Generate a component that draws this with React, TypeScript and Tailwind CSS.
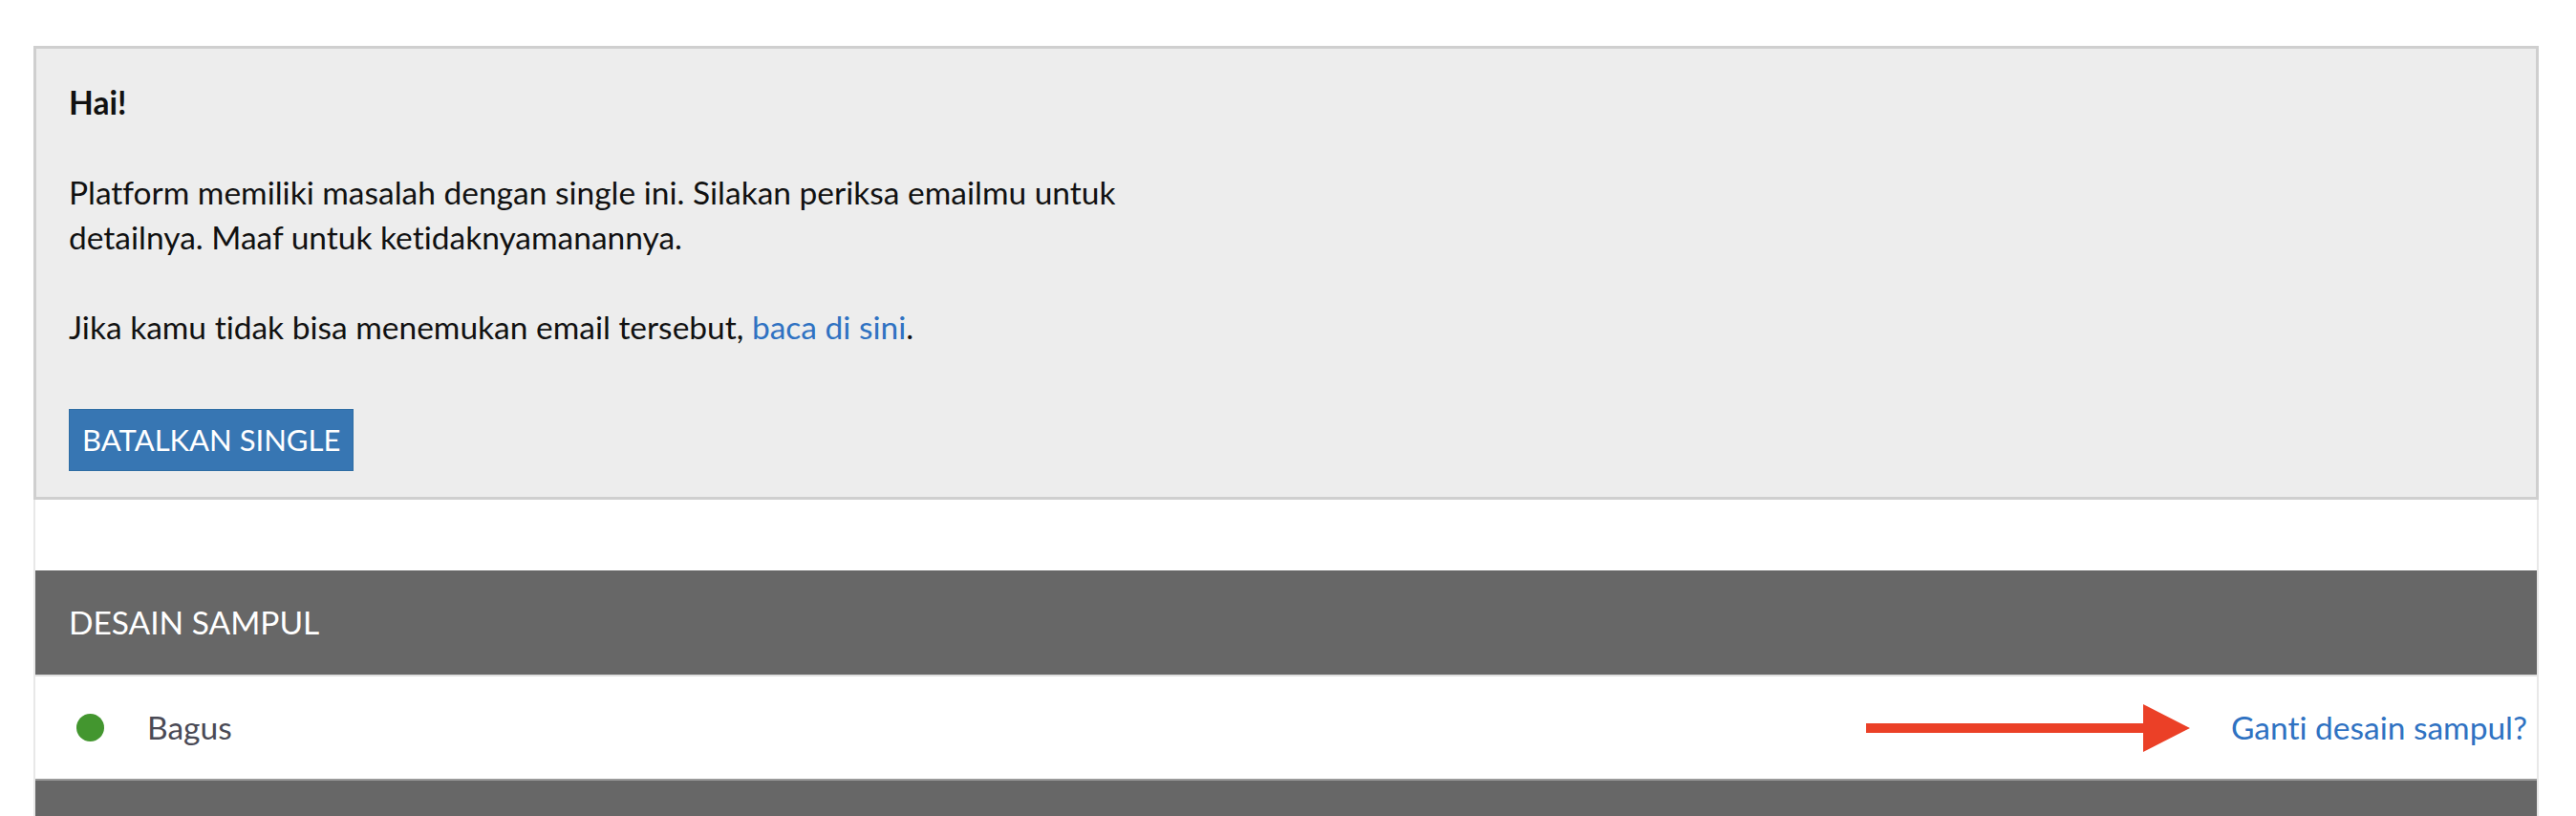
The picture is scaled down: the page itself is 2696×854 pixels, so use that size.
import React from 'react';

function App() {
  return (
    <div className="min-h-screen bg-white pl-[35px] pr-[39px] pt-[48px] font-['Lato',sans-serif] [font-variant-ligatures:none] overflow-hidden h-[854px]">
      {/* Notice box */}
      <div className="border-[3px] border-[#cfcfcf] bg-[#ededed] pl-[34px] pt-[33px] pb-[27px] text-[33.5px] leading-[47px] text-[#111]">
        <p className="font-bold">Hai!</p>
        <p className="mt-[47px] max-w-[1130px]">
          Platform memiliki masalah dengan single ini. Silakan periksa emailmu untuk detailnya. Maaf untuk ketidaknyamanannya.
        </p>
        <p className="mt-[47px]">
          Jika kamu tidak bisa menemukan email tersebut,{' '}
          <a href="#" className="text-[#2f72c2]">baca di sini</a>.
        </p>
        <button className="mt-[62px] h-[65px] px-[13px] bg-[#3776b3] border border-[#2e6da4] text-white text-[31px] leading-none uppercase">
          Batalkan Single
        </button>
      </div>

      {/* Sections */}
      <div className="border-x-2 border-[#e8e8e8]">
        <div className="h-[74px]" />
        <div className="h-[109px] bg-[#676767] flex items-center pl-[35px] text-white text-[33.5px] uppercase">
          Desain Sampul
        </div>
        <div className="h-[109px] border-t-2 border-[#e0e0e0] flex items-center pl-[43px] pr-[10px]">
          <span className="w-[29px] h-[29px] rounded-full bg-[#43962f]" />
          <span className="ml-[45px] text-[33.5px] text-[#4a4a55]">Bagus</span>
          <div className="ml-auto flex items-center">
            <svg width="340" height="50" viewBox="0 0 340 50" className="mr-[42px]">
              <rect x="0" y="20" width="292" height="10" fill="#eb4027" />
              <polygon points="290,0 339,25 290,50" fill="#eb4027" />
            </svg>
            <a href="#" className="text-[33.5px] text-[#2f72c2]">Ganti desain sampul?</a>
          </div>
        </div>
        <div className="h-[60px] bg-[#676767] border-t-2 border-[#9a9a9a]" />
      </div>
    </div>
  );
}

export default App;
